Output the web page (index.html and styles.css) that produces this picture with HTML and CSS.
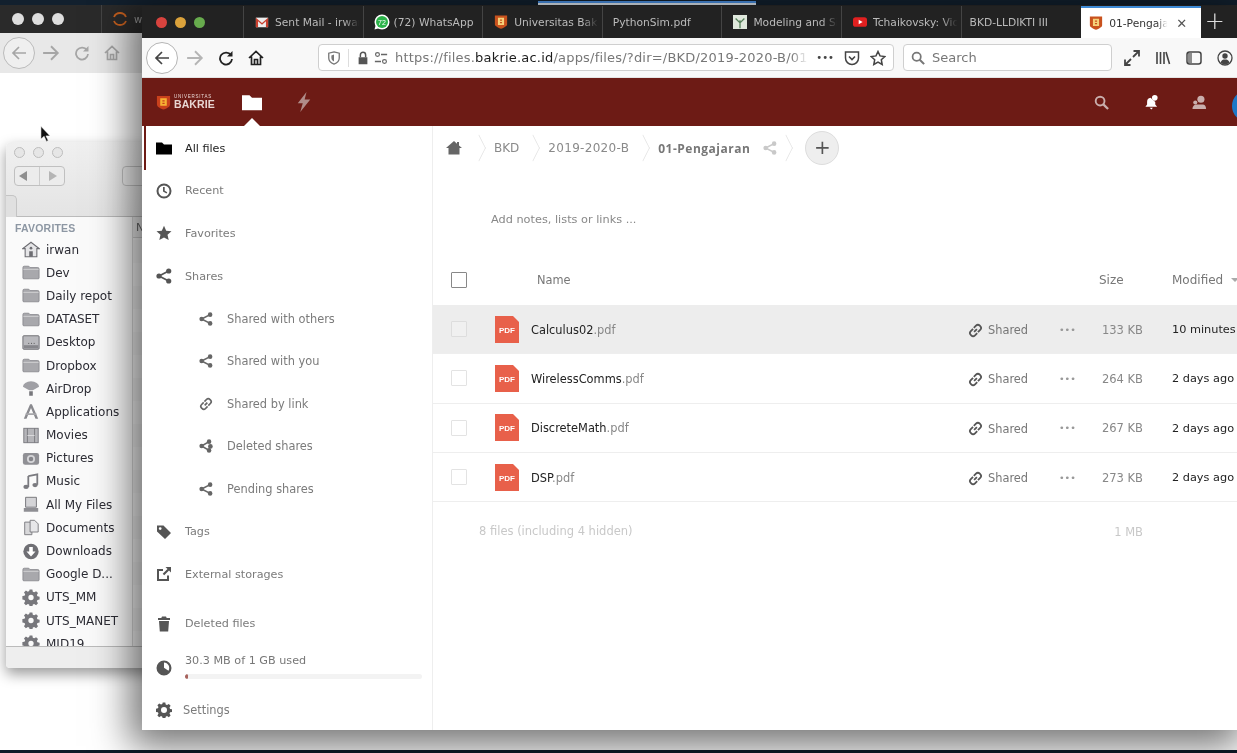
FILE: index.html
```html
<!DOCTYPE html>
<html lang="en">
<head>
<meta charset="utf-8">
<title>01-Pengajaran - Files</title>
<link rel="stylesheet" href="styles.css">
</head>
<body>
<svg class="defs" width="0" height="0" aria-hidden="true">
  <symbol id="i-folder" viewBox="0 0 16 16"><path d="M0 2.500h6l2 2h8v10H0z"/></symbol>
  <symbol id="i-clock" viewBox="0 0 16 16"><path fill-rule="evenodd" d="M8 .5a7.500 7.500 0 1 0 0 15 7.500 7.500 0 0 0 0-15zm0 2a5.500 5.500 0 1 1 0 11 5.500 5.500 0 0 1 0-11z"/><path d="M7 4h1.700v3.700l2.600 1.500-.8 1.400L7 8.600z"/></symbol>
  <symbol id="i-star" viewBox="0 0 16 16"><path d="M8 .8l2.200 4.900 5.300.6-4 3.500 1.200 5.300L8 12.400l-4.700 2.700 1.200-5.300-4-3.500 5.300-.6z"/></symbol>
  <symbol id="i-share" viewBox="0 0 16 16"><circle cx="12.700" cy="3" r="2.600"/><circle cx="3" cy="8" r="2.600"/><circle cx="12.700" cy="13" r="2.600"/><path d="M3 8l9.700-5M3 8l9.700 5" stroke="currentColor" stroke-width="1.800" fill="none"/></symbol>
  <symbol id="i-share-del" viewBox="0 0 16 16"><circle cx="11.500" cy="3" r="2.600"/><circle cx="3" cy="8" r="2.600"/><circle cx="11.500" cy="13" r="2.600"/><path d="M3 8l8.500-5M3 8l8.500 5" stroke="currentColor" stroke-width="1.800" fill="none"/><circle cx="13" cy="8.500" r="2.700"/></symbol>
  <symbol id="i-link" viewBox="0 0 16 16"><path d="M6.500 9.500l3-3M6.200 5.300l2.300-2.400a2.900 2.900 0 0 1 4.100 0l.4.400a2.900 2.900 0 0 1 0 4.100l-2.400 2.400M9.800 10.700l-2.300 2.400a2.900 2.900 0 0 1-4.100 0l-.4-.4a2.900 2.900 0 0 1 0-4.100l2.400-2.400" fill="none" stroke="currentColor" stroke-width="1.900"/></symbol>
  <symbol id="i-tag" viewBox="0 0 16 16"><path fill-rule="evenodd" d="M1 1.500h6.500l7.500 7.500-6 6-8-7.500zM4.200 3.200a1.400 1.400 0 1 0 0 2.800 1.400 1.400 0 0 0 0-2.800z"/></symbol>
  <symbol id="i-external" viewBox="0 0 16 16"><path d="M1 3h6v2H3v8h8V9.500h2V15H1z"/><path d="M9.500 1H15v5.500l-2-2L8.200 9.300 6.700 7.800l4.800-4.800z"/></symbol>
  <symbol id="i-trash" viewBox="0 0 16 16"><path d="M6 .5h4l.7 1.500H14v2H2V2h3.300zM3 5h10l-.8 10.500H3.800z"/></symbol>
  <symbol id="i-pie" viewBox="0 0 16 16"><path fill-rule="evenodd" d="M8 .5a7.500 7.500 0 1 0 0 15 7.500 7.500 0 0 0 0-15zM8 2.500v5.200l4.500 3A5.500 5.500 0 0 0 8 2.500z"/></symbol>
  <symbol id="i-gear" viewBox="0 0 16 16"><path fill-rule="evenodd" d="M6.700.5h2.600l.4 2 1.300.6 1.800-1.100 1.800 1.800-1.100 1.800.6 1.300 2 .4v2.600l-2 .4-.6 1.300 1.100 1.800-1.800 1.800-1.800-1.100-1.300.6-.4 2H6.700l-.4-2-1.300-.6-1.800 1.100-1.800-1.800 1.100-1.800-.6-1.300-2-.4V6.700l2-.4.600-1.300L1.400 3.200 3.200 1.400 5 2.500l1.300-.6zM8 5a3 3 0 1 0 0 6 3 3 0 0 0 0-6z"/></symbol>
  <symbol id="i-home" viewBox="0 0 16 16"><path d="M8 1l3 2.700V2h2v3.500L16 8h-2.500v6.500h-11V8H0z"/></symbol>
  <symbol id="i-search" viewBox="0 0 16 16"><circle cx="6.500" cy="6.500" r="4.700" fill="none" stroke="currentColor" stroke-width="2"/><path d="M10 10l5 5" stroke="currentColor" stroke-width="2.400" fill="none"/></symbol>
  <symbol id="i-tbhome" viewBox="0 0 16 16"><path d="M1 8l7-6.500L15 8M3.500 6.500V14.500h9V6.500M6.500 14.500V9.500h3v5" fill="none" stroke="currentColor" stroke-width="1.700"/></symbol>
  <symbol id="i-back" viewBox="0 0 16 16"><path d="M15 8H2M8 2L2 8l6 6" fill="none" stroke="currentColor" stroke-width="1.700"/></symbol>
  <symbol id="i-fwd" viewBox="0 0 16 16"><path d="M1 8h13M8 2l6 6-6 6" fill="none" stroke="currentColor" stroke-width="1.700"/></symbol>
  <symbol id="i-reload" viewBox="0 0 16 16"><path d="M13 5.200A6 6 0 1 0 14 9" fill="none" stroke="currentColor" stroke-width="1.800"/><path d="M14.500 1v5.500H9z"/></symbol>
  <symbol id="i-bolt" viewBox="0 0 16 16"><path d="M10 0L3 9h4l-2 7 8-10H8.500z"/></symbol>
  <symbol id="i-bell" viewBox="0 0 16 16"><path d="M7 3a4.500 4.500 0 0 0-3.700 4.500V10L1.500 12.500h12.500L12 10V7.500z"/><path d="M6 13.500h3.500L8 15.500z"/><circle cx="11.500" cy="3" r="3" fill="#fff"/></symbol>
  <symbol id="i-contacts" viewBox="0 0 16 16"><circle cx="9.500" cy="4.500" r="3.800"/><circle cx="3.500" cy="8" r="2.200"/><path d="M.5 15c0-3 1.500-4.500 3.500-5h8c2 .5 3 2 3 5z"/></symbol>
  <symbol id="i-fstar" viewBox="0 0 16 16"><path d="M8 1.500l2 4.400 4.800.6-3.500 3.200.9 4.800L8 12.100l-4.200 2.400.9-4.800L1.200 6.500 6 5.900z" fill="none" stroke="currentColor" stroke-width="1.500"/></symbol>
  <symbol id="i-pocket" viewBox="0 0 16 16"><path d="M1.500 2h13v6a6.500 6.500 0 0 1-13 0z" fill="none" stroke="currentColor" stroke-width="1.500"/><path d="M5 6.500L8 9.500l3-3" fill="none" stroke="currentColor" stroke-width="1.600"/></symbol>
  <symbol id="i-shield" viewBox="0 0 16 16"><path d="M8 1l6 1.500V8c0 3.500-3 6-6 7-3-1-6-3.500-6-7V2.500z" fill="none" stroke="currentColor" stroke-width="1.500"/><path d="M8 4v8c-2-.8-3-2.300-3-4.200V5z"/></symbol>
  <symbol id="i-lock" viewBox="0 0 16 16"><path d="M3 7h10v8H3z"/><path d="M5 7V4.500a3 3 0 0 1 6 0V7" fill="none" stroke="currentColor" stroke-width="1.700"/></symbol>
  <symbol id="i-perm" viewBox="0 0 16 16"><circle cx="4" cy="4" r="2.200" fill="none" stroke="currentColor" stroke-width="1.300"/><circle cx="12" cy="12" r="2.200" fill="none" stroke="currentColor" stroke-width="1.300"/><path d="M8 4h7M1 12h7" stroke="currentColor" stroke-width="1.500"/></symbol>
  <symbol id="i-expand" viewBox="0 0 16 16"><path d="M9.500 1H15v5.500M15 1L9 7M6.500 15H1V9.500M1 15l6-6" fill="none" stroke="currentColor" stroke-width="1.800"/></symbol>
  <symbol id="i-library" viewBox="0 0 16 16"><path d="M2 2v12M5.500 2v12M9 2v12M11 2l3.500 12" fill="none" stroke="currentColor" stroke-width="1.600"/></symbol>
  <symbol id="i-sidebar" viewBox="0 0 16 16"><rect x="1" y="2" width="14" height="12" rx="2.500" fill="none" stroke="currentColor" stroke-width="1.500"/><path d="M2 3h4v10H2z" opacity=".6"/></symbol>
  <symbol id="i-account" viewBox="0 0 16 16"><circle cx="8" cy="8" r="7" fill="none" stroke="currentColor" stroke-width="1.300"/><circle cx="8" cy="6" r="2.700"/><path d="M3.500 12.500c1-2.500 2.500-3 4.500-3s3.500.5 4.500 3A7 7 0 0 1 8 14.500a7 7 0 0 1-4.500-2z"/></symbol>
  <symbol id="i-bakrie" viewBox="0 0 16 16"><path d="M1 .5h14v10c0 2.200-4 4-7 5.300-3-1.300-7-3.100-7-5.300z" fill="#c9521d"/><path d="M4.500 3h7v8.500h-7zM6.800 5v1.500h2.400V5zM6.800 8v1.500h2.400V8z" fill="#f5d27a" fill-rule="evenodd"/></symbol>
  <symbol id="i-ffolder" viewBox="0 0 20 18"><path d="M1 3.500a1.500 1.500 0 0 1 1.500-1.500h5l1.500 1.500h8.500A1.500 1.500 0 0 1 19 5v10a1 1 0 0 1-1 1H2a1 1 0 0 1-1-1z" fill="#a8a8ac" stroke="#7f7f84" stroke-width=".8"/><path d="M1.500 5.500h17" stroke="#d4d4d6" stroke-width="1"/></symbol>
  <symbol id="i-fhouse" viewBox="0 0 20 18"><path d="M10 1L1 8h2.500v9h13V8H19z" fill="#e5e5e7" stroke="#6d6d72" stroke-width="1.200"/><path d="M8 11h4v6H8z" fill="#6d6d72"/><circle cx="10" cy="7.500" r="1.500" fill="#6d6d72"/></symbol>
  <symbol id="i-fdesk" viewBox="0 0 20 18"><rect x="1" y="1.500" width="18" height="15" rx="1" fill="#b9b9bd" stroke="#67676c"/><rect x="2" y="12" width="16" height="3.500" fill="#86868b"/><path d="M7 10h1M10 10h1M13 10h1" stroke="#444" stroke-width="1"/></symbol>
  <symbol id="i-fair" viewBox="0 0 20 18"><path d="M1 7a9 6 0 0 1 18 0l-7 4H8z" fill="#a0a0a5"/><path d="M8 12h4v5H8z" fill="#77777c"/></symbol>
  <symbol id="i-fapps" viewBox="0 0 20 18"><path d="M9 1h2l7 16h-3l-5-12-5 12H2z" fill="#8a8a8f"/><path d="M4 11h12v2H4z" fill="#a6a6aa"/></symbol>
  <symbol id="i-fmovies" viewBox="0 0 20 18"><rect x="2" y="1" width="16" height="16" fill="#b5b5b9" stroke="#76767b"/><path d="M6 1v16M14 1v16" stroke="#76767b"/><path d="M6 9h8" stroke="#dedee0"/></symbol>
  <symbol id="i-fpics" viewBox="0 0 20 18"><rect x="1" y="3" width="18" height="13" rx="2.500" fill="#909095"/><circle cx="10" cy="9.500" r="4.500" fill="#d5d5d8"/><circle cx="10" cy="9.500" r="2.500" fill="#85858a"/></symbol>
  <symbol id="i-fmusic" viewBox="0 0 20 18"><path d="M7 3l10-2v11.500M7 3v12" fill="none" stroke="#7b7b80" stroke-width="2"/><ellipse cx="4.500" cy="15" rx="3" ry="2.300" fill="#7b7b80"/><ellipse cx="14.500" cy="13" rx="3" ry="2.300" fill="#7b7b80"/></symbol>
  <symbol id="i-fall" viewBox="0 0 20 18"><path d="M4 1h12v11H4z" fill="#d4d4d7" stroke="#6e6e73"/><path d="M2 13h16v4H2z" fill="#8e8e93"/></symbol>
  <symbol id="i-fdocs" viewBox="0 0 20 18"><path d="M3 3h8v14H3z" fill="#d8d8da" stroke="#77777c"/><path d="M9 1h5l4 4v9H9z" fill="#e7e7e9" stroke="#77777c"/></symbol>
  <symbol id="i-fdown" viewBox="0 0 20 18"><circle cx="10" cy="9" r="8.500" fill="#6f6f74"/><path d="M8 4h4v5h3l-5 5.500L5 9h3z" fill="#fff"/></symbol>
  <symbol id="i-fgear" viewBox="0 0 16 16"><path fill-rule="evenodd" fill="#77777c" d="M6.700.5h2.600l.4 2 1.300.6 1.800-1.100 1.800 1.800-1.100 1.800.6 1.300 2 .4v2.600l-2 .4-.6 1.300 1.100 1.800-1.800 1.800-1.800-1.100-1.300.6-.4 2H6.700l-.4-2-1.300-.6-1.800 1.100-1.800-1.800 1.100-1.800-.6-1.300-2-.4V6.700l2-.4.600-1.300L1.400 3.200 3.200 1.400 5 2.500l1.300-.6zM8 5.500a2.500 2.500 0 1 0 0 5 2.500 2.500 0 0 0 0-5z"/></symbol>
  <symbol id="i-pdf" viewBox="0 0 24 27"><path d="M0 0h18l6 6v21H0z" fill="#e8604a"/><text x="12" y="16.500" text-anchor="middle" font-size="8" font-weight="700" fill="#fff" font-family="Liberation Sans, sans-serif">PDF</text></symbol>
</svg>

<main class="desktop">

  <section class="win win-back">
    <div class="strip"><span class="strip-load"></span></div>
    <div class="back-tabs">
      <div class="lights lights-back"><i></i><i></i><i></i></div>
      <div class="back-tab">
        <svg class="back-fav" viewBox="0 0 16 16"><path d="M2 6a6.500 6.500 0 0 1 12 0M2 10a6.500 6.500 0 0 0 12 0" fill="none" stroke="#c8611f" stroke-width="1.800"/></svg>
        <span>w</span>
      </div>
    </div>
    <div class="back-toolbar">
      <span class="circle-btn"><svg class="ico ico-16"><use href="#i-back"/></svg></span>
      <svg class="ico ico-18 back-fwd"><use href="#i-fwd"/></svg>
      <svg class="ico ico-16"><use href="#i-reload"/></svg>
      <svg class="ico ico-16"><use href="#i-tbhome"/></svg>
    </div>
    <div class="back-page"></div>
  </section>

  <svg class="cursor" viewBox="0 0 12 18"><path d="M1 0v14l3.500-3 2.500 5.500 2-1-2.500-5H11z" fill="#111" stroke="#fff" stroke-width=".6"/></svg>

  <section class="win finder">
    <header class="finder-top">
      <div class="lights lights-finder"><i></i><i></i><i></i></div>
      <div class="finder-tools">
        <div class="finder-nav"><span class="tri tri-l"></span><span class="tri tri-r"></span></div>
        <span class="finder-view"></span>
      </div>
      <span class="finder-tab"></span>
    </header>
    <div class="finder-body">
      <aside class="finder-side">
        <h2>FAVORITES</h2>
        <ul>
          <li><svg class="fi"><use href="#i-fhouse"/></svg>irwan</li>
          <li><svg class="fi"><use href="#i-ffolder"/></svg>Dev</li>
          <li><svg class="fi"><use href="#i-ffolder"/></svg>Daily repot</li>
          <li><svg class="fi"><use href="#i-ffolder"/></svg>DATASET</li>
          <li><svg class="fi"><use href="#i-fdesk"/></svg>Desktop</li>
          <li><svg class="fi"><use href="#i-ffolder"/></svg>Dropbox</li>
          <li><svg class="fi"><use href="#i-fair"/></svg>AirDrop</li>
          <li><svg class="fi"><use href="#i-fapps"/></svg>Applications</li>
          <li><svg class="fi"><use href="#i-fmovies"/></svg>Movies</li>
          <li><svg class="fi"><use href="#i-fpics"/></svg>Pictures</li>
          <li><svg class="fi"><use href="#i-fmusic"/></svg>Music</li>
          <li><svg class="fi"><use href="#i-fall"/></svg>All My Files</li>
          <li><svg class="fi"><use href="#i-fdocs"/></svg>Documents</li>
          <li><svg class="fi"><use href="#i-fdown"/></svg>Downloads</li>
          <li><svg class="fi"><use href="#i-ffolder"/></svg>Google D...</li>
          <li><svg class="fi"><use href="#i-fgear"/></svg>UTS_MM</li>
          <li><svg class="fi"><use href="#i-fgear"/></svg>UTS_MANET</li>
          <li><svg class="fi"><use href="#i-fgear"/></svg>MID19</li>
        </ul>
      </aside>
      <div class="finder-col"><div class="finder-colhead">Name</div></div>
    </div>
    <footer class="finder-status"></footer>
  </section>

  <section class="win win-front">
    <div class="tabbar">
      <div class="lights lights-front"><i class="red"></i><i class="amber"></i><i class="green"></i></div>
      <div class="tab"><svg class="fav" viewBox="0 0 16 16"><path d="M1 3h14v11H1z" fill="#eee"/><path d="M1 3l7 6 7-6v11h-2.500V7L8 11 3.500 7v7H1z" fill="#c8402f"/></svg><span class="tab-title">Sent Mail - irwan</span></div>
      <div class="tab tab-wa"><svg class="fav fav-lg" viewBox="0 0 16 16"><circle cx="8" cy="8" r="7.500" fill="#fff"/><circle cx="8" cy="8" r="6" fill="#2cb34a"/><path d="M.5 15.500l1.200-4.500 3.300 3.300z" fill="#fff"/><text x="8" y="10.500" text-anchor="middle" font-size="7" fill="#fff" font-family="Liberation Sans, sans-serif">72</text></svg><span class="tab-title">(72) WhatsApp</span></div>
      <div class="tab"><svg class="fav"><use href="#i-bakrie"/></svg><span class="tab-title">Universitas Bakrie</span></div>
      <div class="tab tab-plain"><span class="tab-title">PythonSim.pdf</span></div>
      <div class="tab"><svg class="fav" viewBox="0 0 16 16"><path d="M0 0h16v16H0z" fill="#dfe8dc"/><path d="M8 15V6M8 9L3 4M8 9l5-5" stroke="#56805a" stroke-width="1.500" fill="none"/></svg><span class="tab-title">Modeling and Simulation</span></div>
      <div class="tab"><svg class="fav" viewBox="0 0 16 16"><rect x="0" y="2.500" width="16" height="11" rx="3" fill="#e02020"/><path d="M6.500 5.500l4.500 2.500-4.500 2.500z" fill="#fff"/></svg><span class="tab-title">Tchaikovsky: Violin</span></div>
      <div class="tab tab-plain tab-bkd"><span class="tab-title">BKD-LLDIKTI III</span></div>
      <div class="tab tab-active"><svg class="fav"><use href="#i-bakrie"/></svg><span class="tab-title">01-Pengajaran</span><span class="tab-close">✕</span></div>
      <span class="tab-new">+</span>
    </div>

    <div class="toolbar">
      <span class="circle-btn circle-front"><svg class="ico ico-16"><use href="#i-back"/></svg></span>
      <svg class="ico ico-18 tb-fwd"><use href="#i-fwd"/></svg>
      <svg class="ico ico-16 tb-dark"><use href="#i-reload"/></svg>
      <svg class="ico ico-16 tb-dark"><use href="#i-tbhome"/></svg>
      <div class="urlbar">
        <svg class="ico ico-14 url-shield"><use href="#i-shield"/></svg>
        <span class="url-sep"></span>
        <svg class="ico ico-14 url-lock"><use href="#i-lock"/></svg>
        <svg class="ico ico-14 url-perm"><use href="#i-perm"/></svg>
        <span class="url-text">https://files.<b>bakrie.ac.id</b>/apps/files/?dir=/BKD/2019-2020-B/01-Pengajaran</span>
        <span class="url-more">•••</span>
        <svg class="ico ico-16 url-act"><use href="#i-pocket"/></svg>
        <svg class="ico ico-16 url-act"><use href="#i-fstar"/></svg>
      </div>
      <div class="searchbar"><svg class="ico ico-14"><use href="#i-search"/></svg><span>Search</span></div>
      <div class="tb-right">
        <svg class="ico ico-16"><use href="#i-expand"/></svg>
        <svg class="ico ico-16"><use href="#i-library"/></svg>
        <svg class="ico ico-16"><use href="#i-sidebar"/></svg>
        <svg class="ico ico-16"><use href="#i-account"/></svg>
      </div>
    </div>

    <header class="appbar">
      <div class="logo">
        <svg class="logo-mark" viewBox="0 0 16 16"><path d="M1 1h14v9c0 2.500-4 4.500-7 5.500-3-1-7-3-7-5.500z" fill="#c9411c"/><path d="M4.500 3.500h7v8h-7zM6.800 5.500v1.300h2.400V5.500zM6.800 8.300v1.300h2.400V8.300z" fill="#f6b233" fill-rule="evenodd"/></svg>
        <div class="logo-text"><small>UNIVERSITAS</small><strong>BAKRIE</strong></div>
      </div>
      <nav class="app-nav">
        <span class="app-item app-current"><svg class="ico ico-20"><use href="#i-folder"/></svg></span>
        <span class="app-item"><svg class="ico ico-20 app-dim"><use href="#i-bolt"/></svg></span>
      </nav>
      <div class="app-right">
        <svg class="ico ico-15"><use href="#i-search"/></svg>
        <svg class="ico ico-15 app-bell"><use href="#i-bell"/></svg>
        <svg class="ico ico-15"><use href="#i-contacts"/></svg>
        <span class="avatar"></span>
      </div>
    </header>

    <div class="app-body">
      <aside class="sidebar">
        <ul class="nav">
          <li class="nav-item nav-active"><svg class="ico ico-16"><use href="#i-folder"/></svg>All files</li>
          <li class="nav-item"><svg class="ico ico-16"><use href="#i-clock"/></svg>Recent</li>
          <li class="nav-item"><svg class="ico ico-16"><use href="#i-star"/></svg>Favorites</li>
          <li class="nav-item"><svg class="ico ico-16"><use href="#i-share"/></svg>Shares</li>
          <li class="nav-item nav-sub"><svg class="ico ico-14"><use href="#i-share"/></svg>Shared with others</li>
          <li class="nav-item nav-sub"><svg class="ico ico-14"><use href="#i-share"/></svg>Shared with you</li>
          <li class="nav-item nav-sub"><svg class="ico ico-14"><use href="#i-link"/></svg>Shared by link</li>
          <li class="nav-item nav-sub"><svg class="ico ico-14"><use href="#i-share-del"/></svg>Deleted shares</li>
          <li class="nav-item nav-sub"><svg class="ico ico-14"><use href="#i-share"/></svg>Pending shares</li>
          <li class="nav-item"><svg class="ico ico-16"><use href="#i-tag"/></svg>Tags</li>
          <li class="nav-item"><svg class="ico ico-16"><use href="#i-external"/></svg>External storages</li>
        </ul>
        <div class="side-bottom">
          <div class="nav-item"><svg class="ico ico-16"><use href="#i-trash"/></svg>Deleted files</div>
          <div class="quota">
            <svg class="ico ico-16"><use href="#i-pie"/></svg>
            <div class="quota-body">
              <span>30.3 MB of 1 GB used</span>
              <div class="quota-track"><div class="quota-fill" style="width:1.300%"></div></div>
            </div>
          </div>
          <div class="nav-item nav-settings"><svg class="ico ico-16"><use href="#i-gear"/></svg>Settings</div>
        </div>
      </aside>

      <section class="files">
        <div class="crumbs">
          <svg class="ico ico-16 crumb-home"><use href="#i-home"/></svg>
          <i class="chev"></i><span class="crumb">BKD</span>
          <i class="chev"></i><span class="crumb">2019-2020-B</span>
          <i class="chev"></i><span class="crumb crumb-cur">01-Pengajaran</span>
          <svg class="ico ico-14 crumb-share"><use href="#i-share"/></svg>
          <i class="chev chev-last"></i>
          <span class="add-btn">+</span>
        </div>
        <p class="notes">Add notes, lists or links ...</p>
        <div class="row row-head">
          <span class="check check-head"></span>
          <span class="col-name head-name">Name</span>
          <span class="col-size">Size</span>
          <span class="col-mod">Modified <i class="sort"></i></span>
        </div>
        <div class="row row-file row-hover">
          <span class="check"></span><svg class="pdf"><use href="#i-pdf"/></svg>
          <span class="col-name">Calculus02<em>.pdf</em></span>
          <span class="col-share"><svg class="ico ico-15"><use href="#i-link"/></svg>Shared</span>
          <span class="col-dots">•••</span>
          <span class="col-size">133 KB</span><span class="col-mod">10 minutes ago</span>
        </div>
        <div class="row row-file">
          <span class="check"></span><svg class="pdf"><use href="#i-pdf"/></svg>
          <span class="col-name">WirelessComms<em>.pdf</em></span>
          <span class="col-share"><svg class="ico ico-15"><use href="#i-link"/></svg>Shared</span>
          <span class="col-dots">•••</span>
          <span class="col-size">264 KB</span><span class="col-mod">2 days ago</span>
        </div>
        <div class="row row-file">
          <span class="check"></span><svg class="pdf"><use href="#i-pdf"/></svg>
          <span class="col-name">DiscreteMath<em>.pdf</em></span>
          <span class="col-share"><svg class="ico ico-15"><use href="#i-link"/></svg>Shared</span>
          <span class="col-dots">•••</span>
          <span class="col-size">267 KB</span><span class="col-mod">2 days ago</span>
        </div>
        <div class="row row-file">
          <span class="check"></span><svg class="pdf"><use href="#i-pdf"/></svg>
          <span class="col-name">DSP<em>.pdf</em></span>
          <span class="col-share"><svg class="ico ico-15"><use href="#i-link"/></svg>Shared</span>
          <span class="col-dots">•••</span>
          <span class="col-size">273 KB</span><span class="col-mod">2 days ago</span>
        </div>
        <div class="row row-sum">
          <span class="sum-count">8 files (including 4 hidden)</span>
          <span class="col-size">1 MB</span>
        </div>
      </section>
    </div>
  </section>
</main>
</body>
</html>
```

FILE: styles.css
```css
* { box-sizing: border-box; }
html, body { margin: 0; height: 100%; overflow: hidden; background: #0d1b28; }
body { font-family: "DejaVu Sans", "Liberation Sans", sans-serif; font-size: 12px; color: #777; }
ul { list-style: none; margin: 0; padding: 0; }
.defs { position: absolute; }

.desktop { position: relative; width: 1237px; height: 753px; overflow: hidden; filter: blur(.55px); background: #0d1b28; }
.win { position: absolute; }
.ico { display: block; fill: currentColor; flex: none; }
.ico-14 { width: 14px; height: 14px; }
.ico-15 { width: 15px; height: 15px; }
.ico-16 { width: 16px; height: 16px; }
.ico-18 { width: 18px; height: 18px; }
.ico-20 { width: 20px; height: 20px; }

.lights { display: flex; flex: none; align-items: center; }
.lights i { display: block; border-radius: 50%; }

/* back browser window */
.win-back { left: 0; top: 0; width: 1237px; height: 750px; display: flex; flex-direction: column; background: #fff; }
.strip { height: 5px; background: #12202e; position: relative; }
.strip-load { position: absolute; left: 538px; top: 1px; width: 218px; height: 4px; background: linear-gradient(#4a90e2 50%, #e4ecf4 50%); }
.back-tabs { height: 28px; background: #2a2a2a; display: flex; align-items: center; }
.lights-back { width: 102px; height: 100%; padding-left: 12px; gap: 8px; border-right: 1px solid #444; }
.lights-back i { width: 12px; height: 12px; background: #dedede; }
.back-tab { display: flex; align-items: center; gap: 6px; padding-left: 10px; color: #999; font-size: 10px; }
.back-fav { width: 16px; height: 16px; }
.back-toolbar { height: 40px; background: #e8e8e8; display: flex; align-items: center; gap: 14px; padding-left: 3px; color: #a6a6a6; }
.back-fwd { margin-left: -7px; }
.back-page { flex: 1; background: #fff; }
.circle-btn { width: 32px; height: 32px; border-radius: 50%; border: 1px solid #bbb; display: flex; align-items: center; justify-content: center; flex: none; background: rgba(255,255,255,.3); }
.cursor { position: absolute; left: 40px; top: 126px; width: 11px; height: 17px; }

/* finder */
.finder { left: 6px; top: 142px; width: 160px; height: 526px; display: flex; flex-direction: column; background: #fff; border-radius: 5px 5px 4px 4px; box-shadow: 0 6px 14px rgba(0,0,0,.4); overflow: hidden; }
.finder-top { height: 75px; background: linear-gradient(#f0f0f0, #e4e4e4); border-bottom: 1px solid #bbb; display: flex; flex-direction: column; position: relative; flex: none; }
.lights-finder { gap: 8px; padding: 5px 0 0 8px; }
.lights-finder i { width: 11px; height: 11px; border: 1px solid #bcbcbc; background: #e6e6e6; }
.finder-tools { display: flex; gap: 57px; padding: 8px 0 0 8px; }
.finder-nav { width: 51px; height: 20px; border: 1px solid #c0c0c0; border-radius: 4px; display: flex; background: #ececec; }
.tri { flex: 1; position: relative; }
.tri-l { border-right: 1px solid #ccc; }
.tri::after { content: ""; position: absolute; top: 4px; border: 5px solid transparent; }
.tri-l::after { left: 4px; border-right: 8px solid #8f8f8f; border-left: 0; }
.tri-r::after { left: 9px; border-left: 8px solid #b5b5b5; border-right: 0; }
.finder-view { width: 30px; height: 20px; border: 1px solid #c0c0c0; border-radius: 4px; background: #ececec; }
.finder-tab { position: absolute; left: -3px; top: 53px; width: 14px; height: 22px; border: 1px solid #c4c4c4; border-bottom: 0; border-radius: 0 5px 0 0; background: #e0e0e0; }
.finder-body { flex: 1; display: flex; min-height: 0; overflow: hidden; }
.finder-side { width: 127px; flex: none; padding: 5px 0 0 0; border-right: 1px solid #d4d4d4; background: #fafafa; overflow: hidden; }
.finder-side h2 { margin: 0 0 0 9px; font: 700 10.5px/13px "Liberation Sans", sans-serif; color: #8d97a3; letter-spacing: .2px; }
.finder-side ul { padding-top: 3px; }
.finder-side li { height: 23.2px; display: flex; align-items: center; gap: 6px; padding-left: 16px; font-size: 12px; color: #2c2c34; white-space: nowrap; }
.fi { width: 18px; height: 17px; flex: none; }
.finder-col { flex: 1; background: repeating-linear-gradient(#f3f3f3 0 23px, #eeeeee 23px 46px); }
.finder-colhead { height: 21px; padding: 4px 0 0 3px; font-size: 11px; color: #666; background: #eaeaea; border-bottom: 1px solid #ccc; }
.finder-status { height: 22px; flex: none; background: #eee; border-top: 1px solid #bbb; }

/* front window */
.win-front { left: 142px; top: 6px; width: 1095px; height: 724px; display: flex; flex-direction: column; background: #fff; box-shadow: -4px 8px 36px 8px rgba(0,0,0,.55); }
.tabbar { height: 32px; background: #222; display: flex; align-items: stretch; flex: none; color: #bbb; font-size: 10.7px; }
.lights-front { width: 102px; padding-left: 14px; gap: 8px; border-right: 1px solid #444; }
.lights-front i { width: 11px; height: 11px; }
.red { background: #d8433e; }
.amber { background: #dba23b; }
.green { background: #67ab4d; }
.tab { width: 119.6px; flex: none; display: flex; align-items: center; gap: 6px; padding-left: 11px; border-right: 1px solid #444; overflow: hidden; white-space: nowrap; }
.tab-wa { padding-left: 10px; gap: 4px; }
.tab-plain { padding-left: 10px; }
.tab-bkd { padding-left: 8px; border-right: 0; }
.fav { width: 14px; height: 14px; flex: none; }
.fav-lg { width: 16px; height: 16px; }
.tab-title { flex: 1; min-width: 0; overflow: hidden; padding-right: 10px; -webkit-mask-image: linear-gradient(90deg, #000 78%, transparent 96%); mask-image: linear-gradient(90deg, #000 78%, transparent 96%); }
.tab-plain .tab-title, .tab-wa .tab-title { -webkit-mask-image: none; mask-image: none; }
.tab-active { background: #fff; color: #333; border-top: 2px solid #3d8ad6; border-right: 0; padding-left: 8px; gap: 6px; padding-right: 7px; }
.tab-active .tab-title { padding-right: 0; }
.tab-close { color: #555; font-size: 13px; width: 24px; text-align: center; flex: none; margin-left: -6px; }
.tab-new { color: #ddd; font-size: 24px; font-weight: 300; line-height: 30px; width: 28px; text-align: center; }

.toolbar { height: 40px; background: #f8f8f8; border-bottom: 1px solid #e4e4e4; display: flex; align-items: center; padding-left: 4px; flex: none; color: #444; }
.circle-front { background: #fff; border-color: #b5b5b5; color: #444; }
.tb-fwd { color: #b5b5b5; margin-left: 8px; }
.tb-dark { color: #222; margin-left: 14px; }
.urlbar { margin-left: 54px; width: 576px; height: 27px; flex: none; background: #fff; border: 1px solid #cfcfcf; border-radius: 4px; display: flex; align-items: center; padding: 0 7px 0 8px; color: #666; overflow: hidden; }
.url-shield { color: #777; }
.url-sep { width: 1px; height: 18px; background: #ddd; margin: 0 7px; flex: none; }
.url-lock { color: #555; }
.url-perm { margin-left: 4px; color: #666; }
.url-text { flex: 1; min-width: 0; overflow: hidden; white-space: nowrap; margin-left: 7px; font-size: 13px; letter-spacing: .2px; color: #777; -webkit-mask-image: linear-gradient(90deg, #000 96%, transparent); mask-image: linear-gradient(90deg, #000 96%, transparent); }
.url-text b { font-weight: 400; color: #1c1c1c; }
.url-more { font-size: 10px; margin: 0 8px; color: #444; flex: none; }
.url-act { color: #444; margin-left: 2px; margin-right: 8px; }
.url-act:last-child { margin-right: 0; }
.searchbar { margin-left: 9px; width: 209px; height: 27px; flex: none; background: #fff; border: 1px solid #cfcfcf; border-radius: 4px; display: flex; align-items: center; gap: 7px; padding-left: 7px; color: #777; font-size: 13px; }
.tb-right { display: flex; align-items: center; gap: 15px; margin-left: 12px; color: #444; }

.appbar { height: 48px; background: #6d1b15; display: flex; align-items: center; padding-left: 14px; flex: none; position: relative; }
.logo { display: flex; align-items: center; gap: 3px; width: 86px; flex: none; }
.logo-mark { width: 15px; height: 17px; flex: none; }
.logo-text { display: flex; flex-direction: column; color: #e8d6d2; font-family: "Liberation Sans", sans-serif; line-height: 1; }
.logo-text small { font-size: 4.500px; letter-spacing: .75px; }
.logo-text strong { font-size: 10.500px; letter-spacing: .1px; font-weight: 700; }
.app-nav { display: flex; align-items: center; gap: 32px; }
.app-item { display: block; width: 20px; color: #fff; position: relative; }
.app-dim { color: #b08c89; }
.app-current::after { content: ""; position: absolute; left: 2px; top: 26px; border: 8px solid transparent; border-top: 0; border-bottom: 8px solid #fff; }
.app-right { margin-left: auto; display: flex; align-items: center; gap: 34px; width: 143px; flex: none; color: #c9aeac; }
.app-bell { color: #fff; margin-left: 1px; margin-right: -1px; }
.avatar { position: absolute; right: -27px; top: 12px; width: 32px; height: 32px; border-radius: 50%; background: #1d78c8; }

.app-body { flex: 1; min-height: 0; display: flex; }
.sidebar { width: 291px; flex: none; border-right: 1px solid #eee; display: flex; flex-direction: column; background: #fff; }
.nav { padding-top: 1px; }
.nav-item { height: 42.6px; display: flex; align-items: center; gap: 13px; padding-left: 14px; font-size: 11.2px; color: #7b7b7b; white-space: nowrap; }
.nav-item .ico { color: #555; }
.nav-active { color: #222; position: relative; }
.nav-active .ico { color: #000; }
.nav-active::before { content: ""; position: absolute; left: 2px; top: -1px; bottom: 0; width: 2px; background: #6d1b15; }
.nav-sub { padding-left: 57px; gap: 14px; font-size: 11.4px; }
.nav-sub .ico { color: #666; }
.side-bottom { margin-top: auto; }
.quota { height: 45px; display: flex; align-items: center; gap: 13px; padding: 0 10px 0 14px; }
.quota .ico { color: #555; }
.quota-body { flex: 1; font-size: 11.2px; color: #777; margin-top: -3px; }
.quota-body span { display: block; height: 20px; }
.quota-track { height: 5px; border-radius: 3px; background: #f3f3f3; overflow: hidden; }
.quota-fill { height: 100%; border-radius: 3px; background: #a8635d; }
.nav-settings { height: 40px; gap: 11px; font-size: 11.4px; }

.files { flex: 1; min-width: 0; overflow: hidden; background: #fff; }
.crumbs { height: 44px; display: flex; align-items: center; padding-left: 13px; font-size: 12px; color: #8a8a8a; }
.crumb-home { color: #666; margin-right: 3px; }
.chev { display: block; flex: none; width: 16px; height: 16px; border-top: 1px solid #e2e2e2; border-right: 1px solid #e2e2e2; transform: scale(.6,1.2) rotate(45deg); margin: 0 7px 0 6px; }
.chev-last { margin-left: 1px; }
.crumb { white-space: nowrap; letter-spacing: .3px; }
.crumb:first-of-type { letter-spacing: 0; }
.crumb-cur { font-weight: 700; font-family: "Open Sans", "DejaVu Sans", sans-serif; color: #777; letter-spacing: .5px; }
.crumb-share { color: #c9c9c9; margin-left: 13px; }
.add-btn { width: 34px; height: 34px; flex: none; margin-left: 4px; border-radius: 50%; background: #eee; border: 1px solid #ddd; text-align: center; font-size: 20px; line-height: 30px; color: #555; }
.notes { margin: 0; padding: 43px 0 0 58px; height: 84px; font-size: 11.3px; color: #888; }
.row { display: flex; align-items: center; height: 49.3px; white-space: nowrap; border-bottom: 1px solid #eee; padding-left: 18px; }
.row-head { height: 51px; border-bottom: 0; color: #777; }
.check { width: 16px; height: 16px; flex: none; border: 1px solid #e3e3e3; background: #fff; border-radius: 1px; }
.row-hover .check { background: #f0f0f0; border-color: #ddd; }
.check-head { border-color: #888; }
.pdf { width: 24px; height: 27px; margin-left: 28px; flex: none; }
.col-name { flex: none; width: 437px; margin-left: 12px; color: #222; font-size: 11.4px; padding-top: 1px; }
.col-name em { font-style: normal; color: #888; }
.head-name { margin-left: 70px; width: 562px; color: #777; padding-top: 0; }
.col-share { width: 91px; flex: none; display: flex; align-items: center; gap: 5px; color: #777; font-size: 11.4px; padding-top: 2px; }
.col-share .ico { color: #555; }
.col-dots { width: 30px; flex: none; font-size: 9.5px; color: #999; }
.col-size { width: 54px; flex: none; text-align: right; color: #888; font-size: 11.5px; padding-top: 1px; }
.row-head .col-size { text-align: left; width: 44px; font-size: 12px; color: #777; padding-top: 0; }
.col-mod { margin-left: 29px; color: #222; font-size: 11.3px; padding-top: 1px; }
.row-head .col-mod { color: #777; font-size: 12px; padding-top: 0; }
.row-hover { background: #ededed; }
.sort { display: inline-block; width: 0; height: 0; margin-left: 4px; vertical-align: 2px; border: 4px solid transparent; border-bottom: 0; border-top: 4px solid #aaa; }
.row-sum { border-bottom: 0; height: 58px; padding-left: 46px; }
.sum-count { width: 610px; flex: none; color: #c8c8c8; font-size: 11.5px; }
.row-sum .col-size { color: #c8c8c8; }
```
